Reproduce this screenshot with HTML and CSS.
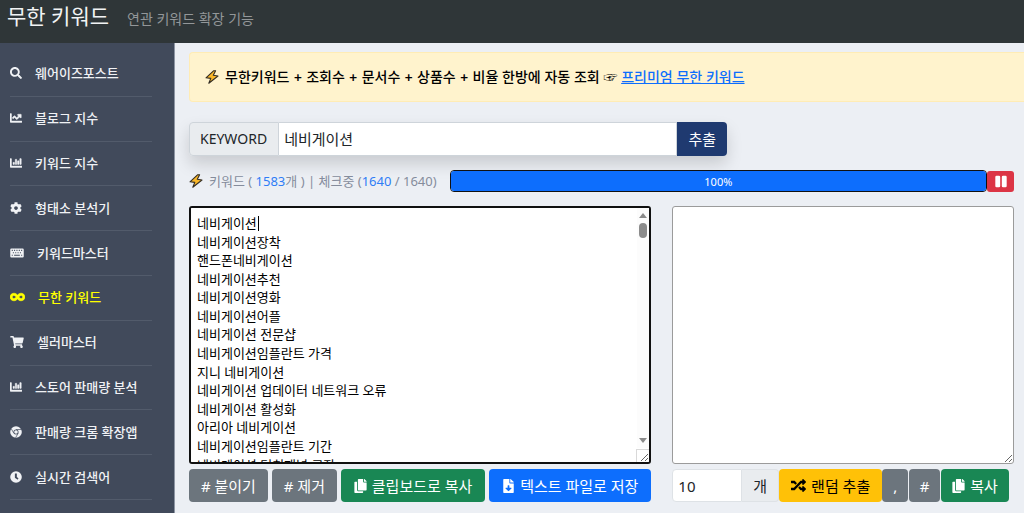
FILE: index.html
```html
<!DOCTYPE html>
<html lang="ko">
<head>
<meta charset="utf-8">
<meta name="viewport" content="width=device-width, initial-scale=1">
<title>무한 키워드</title>
<link rel="stylesheet" href="styles.css">
</head>
<body>
<svg class="defs" aria-hidden="true">
  <symbol id="i-search" viewBox="0 0 512 512"><path d="M505 442.700L405.300 343c-4.500-4.500-10.600-7-17-7H372c27.600-35.300 44-79.700 44-128C416 93.100 322.900 0 208 0S0 93.100 0 208s93.100 208 208 208c48.300 0 92.700-16.400 128-44v16.300c0 6.400 2.500 12.500 7 17l99.700 99.700c9.400 9.400 24.600 9.400 33.900 0l28.300-28.300c9.400-9.400 9.400-24.600.1-34zM208 336c-70.700 0-128-57.200-128-128 0-70.700 57.200-128 128-128 70.700 0 128 57.200 128 128 0 70.700-57.200 128-128 128z"/></symbol>
  <symbol id="i-line" viewBox="0 0 512 512"><path stroke="currentColor" stroke-width="18" d="M496 384H64V80c0-8.800-7.200-16-16-16H16C7.200 64 0 71.200 0 80v336c0 17.700 14.300 32 32 32h464c8.800 0 16-7.200 16-16v-32c0-8.800-7.200-16-16-16zM464 96H345.900c-21.400 0-32.100 25.900-17 41l32.400 32.400L288 242.800l-73.400-73.400c-12.500-12.500-32.800-12.500-45.300 0l-68.700 68.700c-6.200 6.200-6.200 16.400 0 22.600l22.600 22.600c6.200 6.200 16.400 6.200 22.600 0L192 237.300l73.400 73.400c12.500 12.500 32.800 12.500 45.300 0l96-96 32.400 32.400c15.100 15.100 41 4.400 41-17V112c-.1-8.800-7.300-16-16.100-16z"/></symbol>
  <symbol id="i-bar" viewBox="0 0 512 512"><path stroke="currentColor" stroke-width="18" d="M332.800 320h38.400c6.400 0 12.800-6.400 12.800-12.800V172.800c0-6.400-6.400-12.800-12.800-12.800h-38.400c-6.400 0-12.800 6.400-12.800 12.800v134.400c0 6.400 6.400 12.800 12.800 12.800zm96 0h38.400c6.400 0 12.800-6.400 12.800-12.800V76.800c0-6.400-6.400-12.800-12.800-12.800h-38.400c-6.400 0-12.800 6.400-12.800 12.800v230.400c0 6.400 6.400 12.800 12.800 12.800zm-288 0h38.400c6.400 0 12.800-6.400 12.800-12.800v-70.400c0-6.400-6.400-12.800-12.800-12.800h-38.400c-6.400 0-12.800 6.400-12.800 12.800v70.400c0 6.400 6.400 12.800 12.800 12.800zm96 0h38.400c6.400 0 12.800-6.400 12.800-12.800V108.800c0-6.400-6.400-12.800-12.800-12.800h-38.400c-6.400 0-12.800 6.400-12.800 12.800v198.400c0 6.400 6.400 12.800 12.800 12.800zM496 384H64V80c0-8.800-7.200-16-16-16H16C7.200 64 0 71.200 0 80v336c0 17.700 14.300 32 32 32h464c8.800 0 16-7.200 16-16v-32c0-8.800-7.200-16-16-16z"/></symbol>
  <symbol id="i-cog" viewBox="0 0 512 512"><path d="M487.400 315.700l-42.600-24.600c4.300-23.200 4.300-47 0-70.200l42.600-24.600c4.900-2.800 7.100-8.600 5.500-14-11.100-35.600-30-67.800-54.700-94.600-3.800-4.100-10-5.100-14.800-2.300L380.800 110c-17.900-15.400-38.500-27.300-60.800-35.100V25.800c0-5.600-3.900-10.500-9.400-11.700-36.700-8.200-74.300-7.800-109.200 0-5.500 1.200-9.400 6.100-9.400 11.700V75c-22.200 7.900-42.800 19.800-60.800 35.100L88.700 85.500c-4.900-2.800-11-1.900-14.800 2.300-24.700 26.700-43.600 58.900-54.700 94.600-1.700 5.400.6 11.200 5.500 14L67.300 221c-4.300 23.200-4.300 47 0 70.200l-42.600 24.600c-4.900 2.800-7.100 8.600-5.500 14 11.100 35.600 30 67.800 54.700 94.600 3.800 4.100 10 5.100 14.800 2.300l42.600-24.600c17.900 15.400 38.500 27.300 60.800 35.100v49.200c0 5.600 3.900 10.500 9.400 11.700 36.700 8.200 74.300 7.800 109.200 0 5.500-1.200 9.400-6.100 9.400-11.700v-49.200c22.200-7.900 42.800-19.800 60.800-35.100l42.600 24.600c4.900 2.800 11 1.900 14.800-2.300 24.700-26.700 43.600-58.900 54.700-94.600 1.500-5.500-.7-11.300-5.600-14.100zM256 336c-44.100 0-80-35.900-80-80s35.900-80 80-80 80 35.900 80 80-35.900 80-80 80z"/></symbol>
  <symbol id="i-keyboard" viewBox="0 0 576 512"><path fill-rule="evenodd" d="M48 64h480a48 48 0 0 1 48 48v288a48 48 0 0 1-48 48H48a48 48 0 0 1-48-48V112a48 48 0 0 1 48-48zM64 122v44h44v-44zm100 0v44h44v-44zm100 0v44h44v-44zm100 0v44h44v-44zm100 0v44h44v-44zM112 222v44h44v-44zm100 0v44h44v-44zm100 0v44h44v-44zm100 0v44h44v-44zM64 330v40h44v-40zm100 0v40h244v-40zm300 0v40h44v-40z"/></symbol>
  <symbol id="i-infinity" viewBox="0 0 640 512"><path stroke="currentColor" stroke-width="28" d="M471.100 96C405 96 353.300 137.300 320 174.600 286.700 137.300 235 96 168.900 96 75.800 96 0 167.800 0 256s75.800 160 168.900 160c66.100 0 117.800-41.300 151.100-78.600 33.300 37.300 85 78.600 151.100 78.600 93.100 0 168.900-71.800 168.900-160S564.200 96 471.100 96zM168.900 320c-40.200 0-72.900-28.700-72.900-64s32.700-64 72.900-64c38.200 0 73.400 36.100 94 64-20.400 27.600-55.900 64-94 64zm302.200 0c-38.200 0-73.400-36.100-94-64 20.400-27.600 55.900-64 94-64 40.200 0 72.900 28.700 72.900 64s-32.700 64-72.900 64z"/></symbol>
  <symbol id="i-cart" viewBox="0 0 576 512"><path d="M528.100 301.300l47.300-208C578.800 78.300 567.400 64 552 64H159.200l-9.200-44.800C147.800 8 137.900 0 126.500 0H24C10.700 0 0 10.700 0 24v16c0 13.300 10.700 24 24 24h69.900l70.200 343.400C147.300 417.100 136 435.200 136 456c0 30.900 25.100 56 56 56s56-25.100 56-56c0-15.700-6.400-29.800-16.800-40h209.600C430.400 426.200 424 440.300 424 456c0 30.900 25.100 56 56 56s56-25.100 56-56c0-22.200-12.900-41.300-31.600-50.400l5.500-24.300c3.400-15-8-29.300-23.400-29.300H218.100l-6.500-32h293.100c11.200 0 20.900-7.800 23.400-18.700z"/></symbol>
  <symbol id="i-chrome" viewBox="0 0 512 512"><circle cx="256" cy="256" r="248"/><path d="M256 150h222M164 308 54 118M348 308 238 500" fill="none" stroke="#414a5b" stroke-width="30"/><circle cx="256" cy="256" r="108" fill="#414a5b"/><circle cx="256" cy="256" r="78"/></symbol>
  <symbol id="i-clock" viewBox="0 0 512 512"><path fill-rule="evenodd" d="M256 8a248 248 0 1 0 0 496 248 248 0 0 0 0-496zm-36 96h60c8 0 12 4 12 12v144l64 48c6 5 7 11 3 17l-29 39c-5 6-11 7-17 3l-93-68c-7-6-12-15-12-24V116c0-8 4-12 12-12z"/></symbol>
  <symbol id="i-copy" viewBox="0 0 448 512"><path d="M320 448v40c0 13.300-10.700 24-24 24H24c-13.300 0-24-10.700-24-24V120c0-13.300 10.700-24 24-24h72v296c0 30.900 25.100 56 56 56zm0-344V0H152c-13.300 0-24 10.700-24 24v368c0 13.300 10.700 24 24 24h272c13.300 0 24-10.700 24-24V128H344c-13.200 0-24-10.800-24-24zm121-31L375 7A24 24 0 0 0 358 0h-6v96h96v-6.100a24 24 0 0 0-7-16.900z"/></symbol>
  <symbol id="i-file" viewBox="0 0 384 512"><path fill-rule="evenodd" d="M224 136V0H24C10.700 0 0 10.700 0 24v464c0 13.300 10.700 24 24 24h336c13.300 0 24-10.700 24-24V160H248c-13.200 0-24-10.800-24-24zm76.500 211.400-96.400 95.700c-6.700 6.600-17.400 6.600-24 0l-96.400-95.700C73.500 337.300 80.700 320 95 320h65v-80c0-8.800 7.200-16 16-16h32c8.800 0 16 7.200 16 16v80h65.200c14.300 0 21.500 17.300 11.300 27.400zM377 105 279.100 7c-4.500-4.500-10.600-7-17-7H256v128h128v-6.100c0-6.300-2.500-12.400-7-16.900z"/></symbol>
  <symbol id="i-random" viewBox="0 0 512 512"><path d="M505 359c9.300 9.400 9.300 24.600 0 34l-80 80c-15 15-41 4.500-41-17v-40h-58.800a12 12 0 0 1-8.800-3.800l-70.500-75.600 53.300-57.200L352.800 336H384v-40c0-21.500 26-32 41-17zM12 176h84.800l53.600 57.400 53.300-57.100-70.400-75.600a12 12 0 0 0-8.800-3.700H12C5.400 97 0 102.400 0 109v55c0 6.600 5.400 12 12 12zm372 0v40c0 21.500 26 32 41 17l80-80c9.300-9.400 9.300-24.600 0-34l-80-80c-15-15-41-4.500-41 17v40h-58.800a12 12 0 0 0-8.800 3.800L96.800 336H12c-6.600 0-12 5.400-12 12v56c0 6.600 5.400 12 12 12h112.500a12 12 0 0 0 8.800-3.800L352.800 176z"/></symbol>
  <symbol id="i-pause" viewBox="0 0 448 512"><path d="M48 32h96a48 48 0 0 1 48 48v352a48 48 0 0 1-48 48H48a48 48 0 0 1-48-48V80a48 48 0 0 1 48-48zM304 32h96a48 48 0 0 1 48 48v352a48 48 0 0 1-48 48h-96a48 48 0 0 1-48-48V80a48 48 0 0 1 48-48z"/></symbol>
  <symbol id="i-bolt" viewBox="0 0 14 14"><path d="M8.500.8 1 7.800l4.800.6-2 4.800L13 6 8.300 5.300 10.600.8z" fill="#fbb829" stroke="#332d24" stroke-width="1.100" stroke-linejoin="round"/></symbol>
  <symbol id="i-up" viewBox="0 0 8 5"><path d="M4 0l4 5H0z"/></symbol>
  <symbol id="i-down" viewBox="0 0 8 5"><path d="M4 5L0 0h8z"/></symbol>
</svg>

<header class="topbar">
  <h1 class="topbar-title">무한 키워드</h1>
  <p class="topbar-sub">연관 키워드 확장 기능</p>
</header>

<div class="layout">
  <nav class="sidebar">
    <ul class="menu">
      <li class="menu-item"><a class="menu-link" href="#"><svg class="ico"><use href="#i-search"/></svg>웨어이즈포스트</a></li>
      <li class="menu-item"><a class="menu-link" href="#"><svg class="ico"><use href="#i-line"/></svg>블로그 지수</a></li>
      <li class="menu-item"><a class="menu-link" href="#"><svg class="ico"><use href="#i-bar"/></svg>키워드 지수</a></li>
      <li class="menu-item"><a class="menu-link" href="#"><svg class="ico"><use href="#i-cog"/></svg>형태소 분석기</a></li>
      <li class="menu-item"><a class="menu-link" href="#"><svg class="ico ico-wide"><use href="#i-keyboard"/></svg>키워드마스터</a></li>
      <li class="menu-item"><a class="menu-link is-active" href="#"><svg class="ico ico-wider"><use href="#i-infinity"/></svg>무한 키워드</a></li>
      <li class="menu-item"><a class="menu-link" href="#"><svg class="ico ico-wide"><use href="#i-cart"/></svg>셀러마스터</a></li>
      <li class="menu-item"><a class="menu-link" href="#"><svg class="ico"><use href="#i-bar"/></svg>스토어 판매량 분석</a></li>
      <li class="menu-item"><a class="menu-link" href="#"><svg class="ico"><use href="#i-chrome"/></svg>판매량 크롬 확장앱</a></li>
      <li class="menu-item"><a class="menu-link" href="#"><svg class="ico"><use href="#i-clock"/></svg>실시간 검색어</a></li>
    </ul>
  </nav>

  <main class="main">
    <div class="notice">
      <svg class="bolt"><use href="#i-bolt"/></svg>
      <p class="notice-text">무한키워드 + 조회수 + 문서수 + 상품수 + 비율 한방에 자동 조회 ☞ <a class="notice-link" href="#">프리미엄 무한 키워드</a></p>
    </div>

    <div class="content">
      <form class="search">
        <label class="search-label" for="keyword">KEYWORD</label>
        <input class="search-input" id="keyword" type="text" value="네비게이션">
        <button class="search-button" type="button">추출</button>
      </form>

      <div class="status">
        <svg class="bolt"><use href="#i-bolt"/></svg>
        <p class="status-text">키워드 ( <span class="num">1583</span>개 ) | 체크중 (<span class="num">1640</span> / 1640)</p>
        <div class="progress" role="progressbar" aria-label="진행률" aria-valuenow="100" aria-valuemin="0" aria-valuemax="100"><div class="progress-bar" style="width: 100%">100%</div></div>
        <button class="pause" type="button" aria-label="일시정지"><svg class="pause-ico"><use href="#i-pause"/></svg></button>
      </div>

      <div class="panels">
        <section class="panel">
          <div class="result-box">
            <textarea class="area area-result" aria-label="추출된 키워드" spellcheck="false">네비게이션
네비게이션장착
핸드폰네비게이션
네비게이션추천
네비게이션영화
네비게이션어플
네비게이션 전문샵
네비게이션임플란트 가격
지니 네비게이션
네비게이션 업데이터 네트워크 오류
네비게이션 활성화
아리아 네비게이션
네비게이션임플란트 기간
네비게이션 터치패널 고장</textarea>
            <span class="caret"></span>
            <div class="scroll" aria-hidden="true">
              <svg class="scroll-arrow"><use href="#i-up"/></svg>
              <span class="scroll-thumb"></span>
              <svg class="scroll-arrow scroll-arrow-down"><use href="#i-down"/></svg>
            </div>
            <span class="grip-edge"></span>
          </div>
          <div class="actions actions-left">
            <button class="btn btn-gray" type="button"># 붙이기</button>
            <button class="btn btn-gray" type="button"># 제거</button>
            <button class="btn btn-green" type="button"><svg class="btn-ico"><use href="#i-copy"/></svg>클립보드로 복사</button>
            <button class="btn btn-blue" type="button"><svg class="btn-ico"><use href="#i-file"/></svg>텍스트 파일로 저장</button>
          </div>
        </section>
        <section class="panel">
          <textarea class="area area-random" aria-label="랜덤 추출 결과"></textarea>
          <div class="actions actions-right">
            <input class="count" id="count" type="text" value="10">
            <label class="count-unit" for="count">개</label>
            <button class="btn btn-yellow" type="button"><svg class="btn-ico btn-ico-wide"><use href="#i-random"/></svg>랜덤 추출</button>
            <button class="btn btn-gray btn-comma" type="button">,</button>
            <button class="btn btn-gray btn-hash" type="button">#</button>
            <button class="btn btn-green" type="button"><svg class="btn-ico"><use href="#i-copy"/></svg>복사</button>
          </div>
        </section>
      </div>
    </div>
  </main>
</div>
</body>
</html>
```
FILE: styles.css
```css
* { box-sizing: border-box; }

body {
  margin: 0;
  min-height: 100vh;
  display: flex;
  flex-direction: column;
  background: #eceff4;
  color: #212529;
  font-family: "Noto Sans", "Noto Sans CJK KR", sans-serif;
  font-size: 13px;
  line-height: 20px;
}

button, input, textarea { font: inherit; color: inherit; margin: 0; }
h1, p, ul { margin: 0; padding: 0; }
svg { fill: currentColor; flex: none; }
.defs { position: absolute; width: 0; height: 0; }

.topbar {
  display: flex;
  align-items: center;
  gap: 18px;
  padding: 0 7px 11px;
  background: #2f3638;
}
.topbar-title { font-size: 21px; line-height: 32px; font-weight: 400; color: #f1f3f4; }
.topbar-sub { padding-top: 6px; font-size: 14px; line-height: 20px; color: #939799; }

.layout { flex: 1; display: flex; }

.sidebar {
  display: flex;
  width: 175px;
  flex: none;
  padding: 9px 22px 13px 10px;
  background: #414a5b;
  border-right: 1px solid #8d95a3;
}
.menu { flex: 1; display: flex; flex-direction: column; list-style: none; }
.menu-item { flex: 1; display: flex; border-bottom: 1px solid #525b6b; }
.menu-link {
  flex: 1;
  display: flex;
  align-items: center;
  gap: 13px;
  padding-bottom: 1px;
  color: #f0f2f5;
  font-weight: 500;
  text-decoration: none;
  white-space: nowrap;
}
.menu-link.is-active { color: #ffff00; }
.ico { width: 12px; height: 12px; overflow: visible; }
.ico-wide { width: 14px; }
.ico-wider { width: 15px; }

.main { flex: 1; min-width: 0; padding-left: 14px; }

.notice {
  display: flex;
  align-items: center;
  gap: 6px;
  margin-top: 9px;
  padding: 14px 0 14px 15px;
  background: #fff3cd;
  border: 1px solid #ffecb5;
  border-right: 0;
  border-radius: 4px 0 0 4px;
  color: #000;
}
.notice-text { font-family: Inter, "Noto Sans CJK KR", sans-serif; font-size: 14px; font-weight: 500; }
.notice-link { color: #0d6efd; }
.bolt { width: 14px; height: 14px; }

.content { padding: 20px 10px 11px 0; }

.search {
  display: flex;
  width: 538px;
  max-width: 100%;
  height: 34px;
  border-radius: 4px;
  box-shadow: 0 8px 16px rgba(0, 0, 0, 0.15);
  font-size: 15px;
}
.search-label {
  display: flex;
  align-items: center;
  padding: 0 11px 0 10px;
  background: #e9ecef;
  border: 1px solid #ced4da;
  border-radius: 4px 0 0 4px;
  font-size: 14px;
}
.search-input {
  flex: 1;
  min-width: 0;
  padding: 0 5px;
  background: #fff;
  border: 1px solid #ced4da;
  border-left: 0;
}
.search-button {
  padding: 0 11px;
  background: #1f3a70;
  border: 0;
  border-radius: 0 4px 4px 0;
  color: #fff;
}

.status { display: flex; align-items: center; height: 22px; margin-top: 14px; }
.status-text { margin: 0 13px 0 6px; color: #858c9c; white-space: nowrap; }
.num { color: #2f7df6; }
.progress {
  flex: 1;
  height: 22px;
  background: #e9ecef;
  border: 1px solid #111;
  border-radius: 4px;
  overflow: hidden;
}
.progress-bar { background: #0d6efd; color: #fff; font-size: 11px; line-height: 22px; text-align: center; }
.pause {
  display: flex;
  align-items: center;
  justify-content: center;
  width: 27px;
  height: 21px;
  padding: 0;
  background: #dc3545;
  border: 0;
  border-radius: 3px;
  color: #fff;
}
.pause-ico { width: 12px; height: 13px; }

.panels { display: grid; grid-template-columns: 23fr 17fr; gap: 21px; margin-top: 14px; }
.panel { min-width: 0; display: flex; flex-direction: column; }
.area {
  display: block;
  width: 100%;
  height: 258px;
  padding: 6px;
  background: #fff;
  border: 1px solid #9b9b9b;
  border-radius: 3px;
  resize: both;
  color: #000;
  line-height: 1.43;
}
.area-result { border: 2px solid #101010; outline: 0; }

/* Scroll track, caret and corner drawn over the result list */
.result-box { position: relative; }
.caret { position: absolute; left: 69px; top: 10px; width: 1px; height: 15px; background: #000; }
.scroll {
  position: absolute;
  top: 2px;
  right: 2px;
  bottom: 16px;
  width: 12px;
  display: flex;
  flex-direction: column;
  align-items: center;
  padding: 5px 0;
  background: #fcfcfc;
  color: #8b8b8b;
}
.scroll-arrow { width: 8px; height: 5px; }
.scroll-arrow-down { margin-top: auto; }
.scroll-thumb { width: 8px; height: 15px; margin-top: 5px; border-radius: 4px; background: #8b8b8b; }
.grip-edge {
  position: absolute;
  right: 2px;
  bottom: 2px;
  width: 13px;
  height: 13px;
  border: solid #d9d9d9;
  border-width: 1px 0 0 1px;
  pointer-events: none;
}

.actions { display: flex; margin-top: 5px; }
.actions-left { gap: 4px; }
.btn {
  display: flex;
  align-items: center;
  justify-content: center;
  gap: 5px;
  height: 33px;
  padding: 0 11px;
  border: 0;
  border-radius: 4px;
  color: #fff;
  font-size: 15px;
  white-space: nowrap;
}
.actions-left .btn { flex: auto; padding: 0 8px; }
.actions-left .btn-gray { padding: 0 7px; }
.btn-gray { background: #6c757d; }
.btn-green { background: #198754; }
.btn-blue { background: #0d6efd; }
.btn-yellow { padding: 0 12px; background: #ffc107; color: #000; }
.btn-ico { width: 13px; height: 14px; }
.btn-ico-wide { width: 15px; height: 15px; }
.btn-comma { width: 26px; padding: 0; }
.btn-hash { width: 31px; margin: 0 1px; padding: 0; }
.count {
  flex: 0 1 70px;
  min-width: 0;
  height: 33px;
  padding: 0 5px;
  background: #fff;
  border: 1px solid #dee2e6;
  border-radius: 4px 0 0 4px;
  font-size: 15px;
}
.count-unit {
  display: flex;
  align-items: center;
  padding: 0 11px;
  background: #e9ecef;
  border: 1px solid #dee2e6;
  border-left: 0;
  border-radius: 0 4px 4px 0;
  font-size: 15px;
}
```
